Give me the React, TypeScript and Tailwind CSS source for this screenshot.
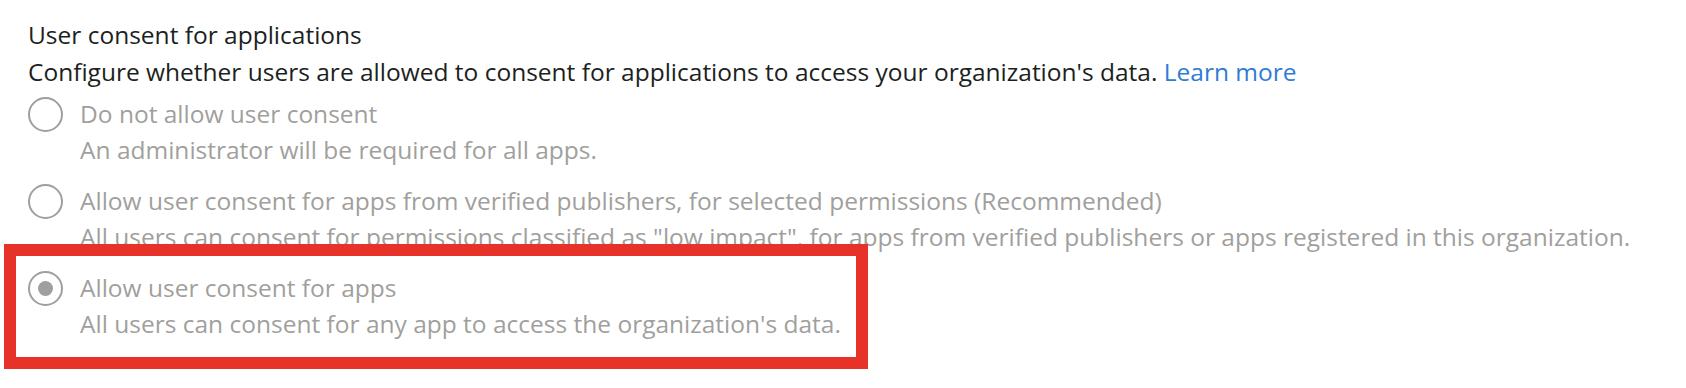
import { ReactNode } from 'react';

const options = [
  {
    id: 'none',
    label: 'Do not allow user consent',
    hint: 'An administrator will be required for all apps.',
  },
  {
    id: 'verified',
    label: 'Allow user consent for apps from verified publishers, for selected permissions (Recommended)',
    hint: 'All users can consent for permissions classified as "low impact", for apps from verified publishers or apps registered in this organization.',
  },
  {
    id: 'all',
    label: 'Allow user consent for apps',
    hint: "All users can consent for any app to access the organization's data.",
  },
];

function Radio({ checked }: { checked: boolean }) {
  return (
    <span className="mt-[1px] flex h-[35px] w-[35px] shrink-0 items-center justify-center rounded-full border-2 border-[#a19f9d]">
      {checked && <span className="h-[15px] w-[15px] rounded-full bg-[#a19f9d]" />}
    </span>
  );
}

function Option({ label, hint, checked, children }: { label: string; hint: string; checked: boolean; children?: ReactNode }) {
  return (
    <div className="relative flex items-start gap-[17px]">
      <Radio checked={checked} />
      <div className="text-[#a19f9d]">
        <div>{label}</div>
        <div>{hint}</div>
      </div>
      {children}
    </div>
  );
}

export default function App() {
  const selected = 'all';

  return (
    <div
      className="min-h-[388px] w-[1686px] bg-white px-[28px] pt-[17px] text-[24.5px] leading-[36.5px] text-[#201f1e]"
      style={{ fontFamily: '"Open Sans", sans-serif' }}
    >
      <div>User consent for applications</div>
      <div>
        Configure whether users are allowed to consent for applications to access your organization's data.{' '}
        <a className="text-[#2f7bd6]">Learn more</a>
      </div>

      <div className="mt-[5.5px] flex flex-col gap-[14px]">
        {options.map((o) => (
          <Option key={o.id} label={o.label} hint={o.hint} checked={o.id === selected}>
            {/* annotation box drawn over the selected option */}
            {o.id === selected && (
              <div className="pointer-events-none absolute -top-[26px] -bottom-[26px] -left-[24px] w-[864px] border-[12px] border-[#e63228]" />
            )}
          </Option>
        ))}
      </div>
    </div>
  );
}
